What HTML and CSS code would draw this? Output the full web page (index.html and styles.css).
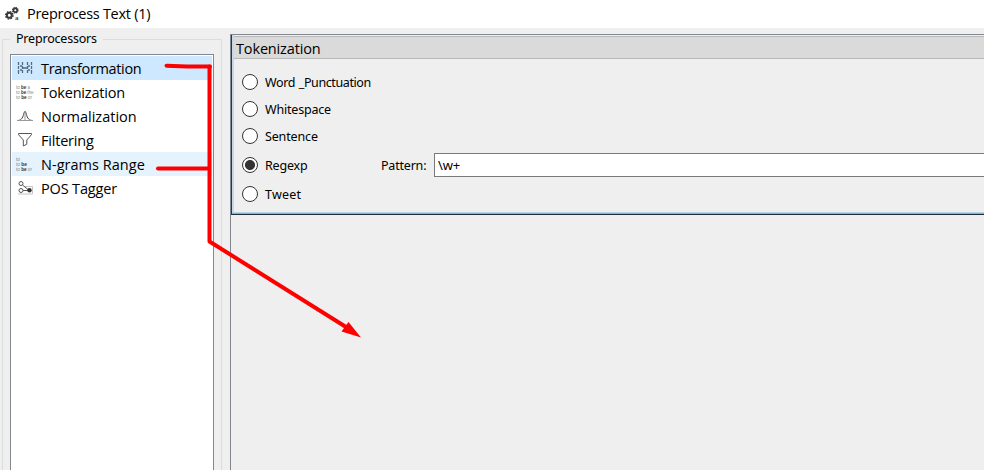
FILE: index.html
```html
<!DOCTYPE html>
<html lang="en">
<head>
<meta charset="utf-8">
<title>Preprocess Text (1)</title>
<link rel="stylesheet" href="styles.css">
</head>
<body>
<div class="window">
  <header class="titlebar">
    <svg class="app-icon" width="16" height="16" viewBox="0 0 16 16">
      <g fill="none" stroke="#383838">
        <circle cx="5.3" cy="9.3" r="2.5" stroke-width="2"/>
        <circle cx="5.3" cy="9.3" r="3.7" stroke-width="1.4" stroke-dasharray="1.6 1.3"/>
        <circle cx="11.300" cy="4.200" r="1.900" stroke-width="1.7"/>
        <circle cx="11.300" cy="4.200" r="2.800" stroke-width="1.2" stroke-dasharray="1.2 1"/>
      </g>
      <text x="11" y="14" class="app-letter">a</text>
    </svg>
    <h1 class="title">Preprocess Text (1)</h1>
  </header>
  <main class="content">
    <fieldset class="group">
      <legend class="legend">Preprocessors</legend>
      <ul class="list">
        <li class="item selected">
          <svg width="18" height="16" viewBox="0 0 18 16" fill="none" stroke="#526b80"><path d="M2.500 2v12M6.500 2v12M11.500 2v12M15.500 2v12" stroke-dasharray="3 1" stroke-width="1.300"/><path d="M2 2.500h1M2 13.500h1M15 2.500h1M15 13.500h1"/><path d="M7 8h4M5 5v2M5 9v2M13 5v2M13 9v2" stroke-width="1.500"/></svg>
          <span class="t1">Transformation</span>
        </li>
        <li class="item">
          <svg width="18" height="16" viewBox="0 0 18 16" class="words"><text x="0" y="4.500" textLength="14" lengthAdjust="spacingAndGlyphs">to <tspan>be</tspan> a</text><text x="0" y="9.500" textLength="17.500" lengthAdjust="spacingAndGlyphs">to <tspan>be</tspan> the</text><text x="0" y="14.500" textLength="16" lengthAdjust="spacingAndGlyphs">to <tspan>be</tspan> or</text></svg>
          <span class="t2">Tokenization</span>
        </li>
        <li class="item">
          <svg width="18" height="16" viewBox="0 0 18 16" fill="none" stroke="#444"><path d="M2 12.500C6 12 7 9 8 5Q9 1.500 10 5C11 9 12 12 16 12.500"/><path d="M1 12.500h16M9 4v8" stroke="#999"/></svg>
          <span class="t3">Normalization</span>
        </li>
        <li class="item">
          <svg width="18" height="16" viewBox="0 0 18 16" fill="none" stroke="#555"><path d="M2.500 1.500h13v1.200L10.800 8v4.200L7.300 14V8L2.500 2.700z"/></svg>
          <span class="t4">Filtering</span>
        </li>
        <li class="item hover">
          <svg width="18" height="16" viewBox="0 0 18 16" class="words"><text x="0" y="4.500" textLength="4" lengthAdjust="spacingAndGlyphs">to</text><text x="0" y="9.500" textLength="11" lengthAdjust="spacingAndGlyphs">to <tspan>be</tspan></text><text x="0" y="14.500" textLength="16" lengthAdjust="spacingAndGlyphs">to <tspan>be</tspan> or</text></svg>
          <span class="t5">N-grams Range</span>
        </li>
        <li class="item">
          <svg width="18" height="16" viewBox="0 0 18 16" fill="none" stroke="#555"><path d="M8 6.500h8.500v7.500H2" stroke="#c4c4c4"/><circle cx="5" cy="3.500" r="2"/><circle cx="5" cy="10.500" r="2"/><path d="M6.500 5L12 9.500M7 10.500h5"/><circle cx="13.500" cy="10.300" r="2.200" fill="#333" stroke="none"/></svg>
          <span class="t6">POS Tagger</span>
        </li>
      </ul>
    </fieldset>
    <section class="workspace">
      <article class="panel">
        <h2 class="panel-head">Tokenization</h2>
        <div class="options">
          <label class="option"><i class="radio"></i><span class="o1">Word _Punctuation</span></label>
          <label class="option"><i class="radio"></i><span class="o2">Whitespace</span></label>
          <label class="option"><i class="radio"></i><span class="o3">Sentence</span></label>
          <div class="option tall"><i class="radio checked"></i><span class="name o4">Regexp</span><span class="pattern">Pattern:</span><div class="field">\w+</div></div>
          <label class="option last"><i class="radio"></i><span class="o5">Tweet</span></label>
        </div>
      </article>
    </section>
  </main>
  <svg class="annotation" width="984" height="470" viewBox="0 0 984 470">
    <g fill="none" stroke="#f00" stroke-width="4" stroke-linecap="round" stroke-linejoin="round">
      <path d="M166.500 65.700L187 66.500H210"/>
      <path d="M209.500 66.500V241.500L346 327" />
      <path d="M158 168.500H209"/>
    </g>
    <path d="M348.500 322L361 337.500L341.500 331.500z" fill="#f00"/>
  </svg>
</div>
</body>
</html>
```
FILE: styles.css
```css
* { box-sizing: border-box; }
body { margin: 0; overflow: hidden; }
.window {
  position: relative;
  width: 984px;
  height: 470px;
  display: flex;
  flex-direction: column;
  overflow: hidden;
  background: #efefef;
  color: #000;
  font: 12.5px/16px "Noto Sans", sans-serif;
}
.titlebar {
  height: 28px;
  display: flex;
  align-items: center;
  padding-left: 4px;
  gap: 7px;
  background: #fff;
}
.app-letter { font: bold 7px "Liberation Serif", serif; fill: #444; }
.title { margin: 0; font: 14.5px/20px "Open Sans", sans-serif; letter-spacing: -0.28px; }
.content { flex: 1; display: flex; min-height: 0; }
.group {
  width: 220px;
  height: 460px;
  margin: 3px 0 0 2px;
  padding: 7px 7px 0;
  border: 1px solid #dcdcdc;
  min-width: 0;
}
.legend { height: 16px; margin-left: 0; padding: 0 6px; letter-spacing: -0.2px; }
.list {
  height: 450px;
  margin: 0;
  padding: 1px;
  list-style: none;
  border: 1px solid #828790;
  background: #fff;
  width: 204px;
}
.item {
  height: 24px;
  display: flex;
  align-items: center;
  padding-left: 4px;
  gap: 7px;
  font: 14.5px/20px "Open Sans", sans-serif;
  letter-spacing: -0.2px;
  white-space: nowrap;
}
.item span { padding-top: 2px; }
.item .t1 { letter-spacing: -0.35px; }
.item .t3 { letter-spacing: 0; }
.item .t5 { letter-spacing: 0.03px; }
.item .t6 { letter-spacing: -0.15px; }
.selected { background: #cde8ff; }
.hover { background: #e5f3ff; }
.words { font: 5.500px "Liberation Sans", sans-serif; fill: #888; letter-spacing: 0; }
.words tspan { font-weight: bold; fill: #333; }
.workspace {
  flex: 1;
  margin: 6px 0 0 8px;
  border: solid #828790;
  border-width: 1px 0 0 1px;
}
.panel {
  height: 180px;
  padding-top: 1px;
  border-left: 1px solid #30343c;
  border-bottom: 1px solid #262c34;
  box-shadow: inset 0 -1px #70bbe0, inset 0 -2px #b5d5eb, inset 2px 0 #c6d9ea;
}
.panel-head {
  height: 23px;
  margin: 0 0 0 2px;
  padding: 1px 0 0 2px;
  border: solid #b7b7b7;
  border-width: 1px 0;
  background: #dadada;
  font: 14.500px/22px "Open Sans", sans-serif;
  letter-spacing: -0.15px;
}
.options { padding: 9px 0 0 10px; }
.option { height: 27px; display: flex; align-items: center; white-space: nowrap; letter-spacing: -0.2px; }
.option span { padding-top: 2px; }
.option .o1 { letter-spacing: -0.4px; word-spacing: 1px; }
.option .o3 { letter-spacing: -0.15px; }
.option .o5 { letter-spacing: 0.2px; }
.tall { height: 31px; }
.last { height: 27px; }
.radio {
  width: 16px;
  height: 16px;
  flex: none;
  margin-right: 7px;
  border: 1px solid #333;
  border-radius: 50%;
  background: #fff;
}
.checked { background: radial-gradient(circle, #333 4.600px, #fff 5.400px); }
.name { width: 116px; }
.pattern { width: 53px; }
.field {
  flex: 1;
  height: 24px;
  padding-left: 3px;
  border: 1px solid #7a7a7a;
  border-right: 0;
  background: #fff;
  font-size: 13px;
  line-height: 22px;
}
.annotation { position: absolute; inset: 0; }
```
